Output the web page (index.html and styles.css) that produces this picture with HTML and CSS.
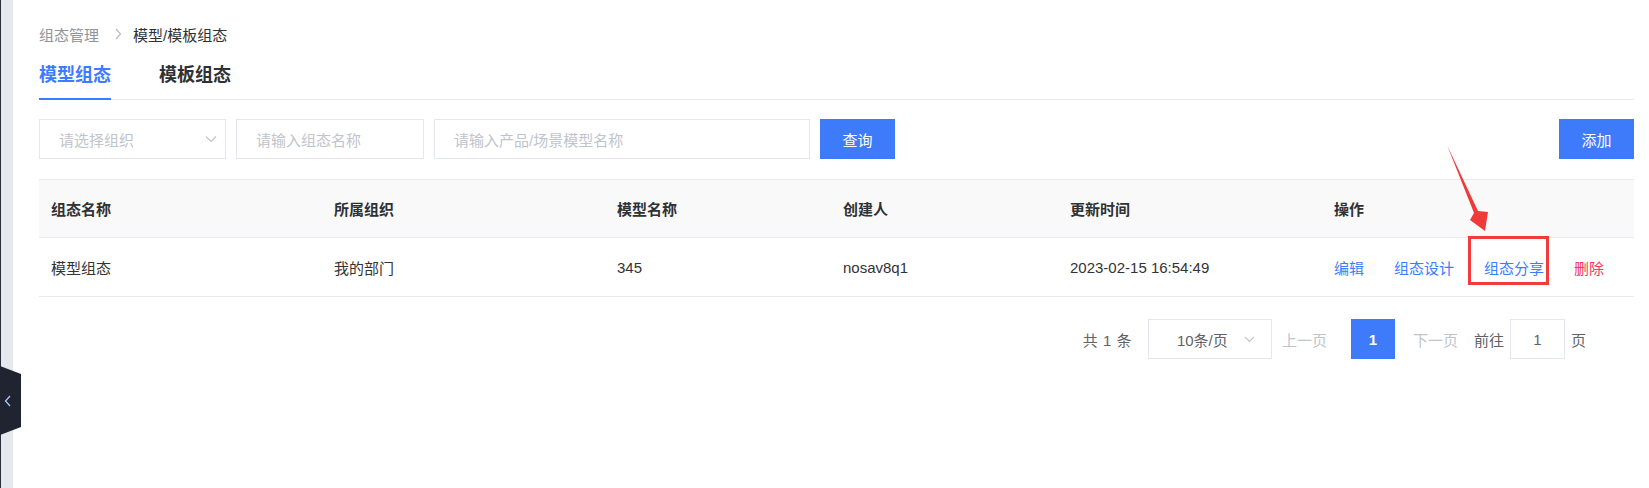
FILE: index.html
```html
<!DOCTYPE html>
<html lang="zh-CN">
<head>
    <meta charset="UTF-8">
    <title>模型/模板组态</title>
    <link rel="stylesheet" href="styles.css">
</head>
<body>
    <div class="edge"></div>

    <!-- collapse handle for the side menu -->
    <div class="collapse">
        <svg width="8" height="12" viewBox="0 0 8 12"><path d="M6 1 L1.5 6 L6 11" fill="none" stroke="#a9c4ff" stroke-width="1.3"/></svg>
    </div>

    <div class="main">
        <div class="crumbs">
            <span class="crumb-parent">组态管理</span>
            <svg class="crumb-sep" width="8" height="12" viewBox="0 0 8 12"><path d="M2 1 L6.5 6 L2 11" fill="none" stroke="#b8bcc4" stroke-width="1.2"/></svg>
            <span class="crumb-current">模型/模板组态</span>
        </div>

        <div class="tabs">
            <div class="tab active">模型组态</div>
            <div class="tab">模板组态</div>
        </div>

        <div class="toolbar">
            <div class="field select-field">
                <span class="placeholder">请选择组织</span>
                <svg width="12" height="8" viewBox="0 0 12 8"><path d="M1 1.5 L6 6.5 L11 1.5" fill="none" stroke="#c0c4cc" stroke-width="1.2"/></svg>
            </div>
            <div class="field name-field"><span class="placeholder">请输入组态名称</span></div>
            <div class="field model-field"><span class="placeholder">请输入产品/场景模型名称</span></div>
            <button class="btn">查询</button>
            <button class="btn btn-add">添加</button>
        </div>

        <div class="table">
            <div class="row head">
                <div class="cell">组态名称</div>
                <div class="cell">所属组织</div>
                <div class="cell">模型名称</div>
                <div class="cell">创建人</div>
                <div class="cell">更新时间</div>
                <div class="cell">操作</div>
            </div>
            <div class="row">
                <div class="cell">模型组态</div>
                <div class="cell">我的部门</div>
                <div class="cell">345</div>
                <div class="cell">nosav8q1</div>
                <div class="cell">2023-02-15 16:54:49</div>
                <div class="cell actions">
                    <a class="link">编辑</a>
                    <a class="link">组态设计</a>
                    <a class="link">组态分享</a>
                    <a class="link danger">删除</a>
                </div>
            </div>
        </div>

        <div class="pager">
            <span class="total">共 1 条</span>
            <div class="size-select">
                <span>10条/页</span>
                <svg width="11" height="7" viewBox="0 0 11 7"><path d="M1 1 L5.5 5.5 L10 1" fill="none" stroke="#c0c4cc" stroke-width="1.1"/></svg>
            </div>
            <span class="nav">上一页</span>
            <span class="page current">1</span>
            <span class="nav">下一页</span>
            <span class="goto goto-first">前往</span>
            <div class="jump">1</div>
            <span class="goto">页</span>
        </div>

        <!-- annotation drawn over the screenshot -->
        <div class="mark-box"></div>
        <svg class="mark-arrow" width="55" height="95" viewBox="0 0 55 95">
            <polygon points="7,5 38,71 48,72 45,91 30,80 34,73" fill="#f03a3a"/>
        </svg>
    </div>
</body>
</html>
```

FILE: styles.css
```css
body {
    margin: 0;
    display: flex;
    min-height: 100vh;
    background: #fff;
    font-family: "Liberation Sans", "Noto Sans CJK SC", sans-serif;
    font-size: 15px;
    color: #333;
    position: relative;
}

.edge {
    width: 12px;
    flex-shrink: 0;
    background: #e5e8ef;
    border-left: 1px solid #2a2f3a;
}

.collapse {
    position: absolute;
    left: 0;
    top: 366px;
    width: 21px;
    height: 69px;
    background: #1f2430;
    clip-path: polygon(0 0, 100% 8px, 100% 61px, 0 100%);
    display: flex;
    align-items: center;
    padding-left: 4px;
    box-sizing: border-box;
}

.main {
    flex: 1;
    position: relative;
    padding: 24px 15px 0 26px;
}

/* breadcrumb */
.crumbs {
    display: flex;
    align-items: center;
    height: 20px;
    font-size: 15px;
}

.crumb-parent { color: #909399; }

.crumb-sep { margin: 0 11px 0 15px; }

.crumb-current { color: #303133; }

/* tabs */
.tabs {
    display: flex;
    gap: 48px;
    margin-top: 12px;
    border-bottom: 1px solid #e8eaf0;
}

.tab {
    padding: 7px 0 11px;
    line-height: 24px;
    font-size: 18px;
    font-weight: bold;
    color: #303133;
    border-bottom: 2px solid transparent;
    margin-bottom: -1px;
}

.tab.active {
    color: #3d7bff;
    border-bottom-color: #3d7bff;
}

/* search bar */
.toolbar {
    display: flex;
    align-items: center;
    gap: 10px;
    margin-top: 19px;
    height: 40px;
}

.field {
    height: 40px;
    box-sizing: border-box;
    border: 1px solid #e4e7ed;
    display: flex;
    align-items: center;
    justify-content: space-between;
    padding: 0 8px 0 19px;
}

.select-field { width: 187px; }
.name-field { width: 188px; }
.model-field { width: 376px; }

.placeholder { color: #c0c4cc; }

.btn {
    height: 40px;
    width: 75px;
    border: none;
    background: #3e7bfa;
    color: #fff;
    font-family: inherit;
    font-size: 15px;
}

.btn-add { margin-left: auto; }

/* table */
.table {
    margin-top: 20px;
    border-top: 1px solid #e8eaf0;
}

.row {
    display: grid;
    grid-template-columns: 283px 283px 226px 227px 264px 1fr;
    height: 58px;
    align-items: center;
    border-bottom: 1px solid #e8eaf0;
}

.row.head {
    background: #f9f9fa;
    height: 57px;
    font-weight: bold;
    color: #303133;
}

.cell { padding-left: 12px; }

.actions {
    display: flex;
    gap: 30px;
}

.link { color: #3d7bff; }

.link.danger { color: #f5365c; }

/* pagination */
.pager {
    display: flex;
    align-items: center;
    justify-content: flex-end;
    margin-top: 22px;
    padding-right: 48px;
    height: 40px;
    color: #606266;
}

.total { letter-spacing: 0.5px; }

.size-select {
    width: 124px;
    height: 40px;
    box-sizing: border-box;
    border: 1px solid #e4e7ed;
    margin: 0 10px 0 16px;
    display: flex;
    align-items: center;
    justify-content: space-between;
    padding: 0 16px 0 28px;
}

.nav { color: #c0c4cc; }

.page {
    width: 44px;
    height: 40px;
    display: flex;
    align-items: center;
    justify-content: center;
    margin: 0 18px 0 24px;
}

.page.current {
    background: #3e7bfa;
    color: #fff;
    font-weight: bold;
}

.goto { margin-left: 8px; }

.goto-first { margin-left: 16px; }

.jump {
    width: 55px;
    height: 40px;
    box-sizing: border-box;
    border: 1px solid #e4e7ed;
    display: flex;
    align-items: center;
    justify-content: center;
    margin-left: 6px;
    margin-right: -2px;
}

.mark-box {
    position: absolute;
    left: 1455px;
    top: 236px;
    width: 81px;
    height: 49px;
    box-sizing: border-box;
    border: 3px solid #f23b3b;
}

.mark-arrow {
    position: absolute;
    left: 1427px;
    top: 140px;
}
```
